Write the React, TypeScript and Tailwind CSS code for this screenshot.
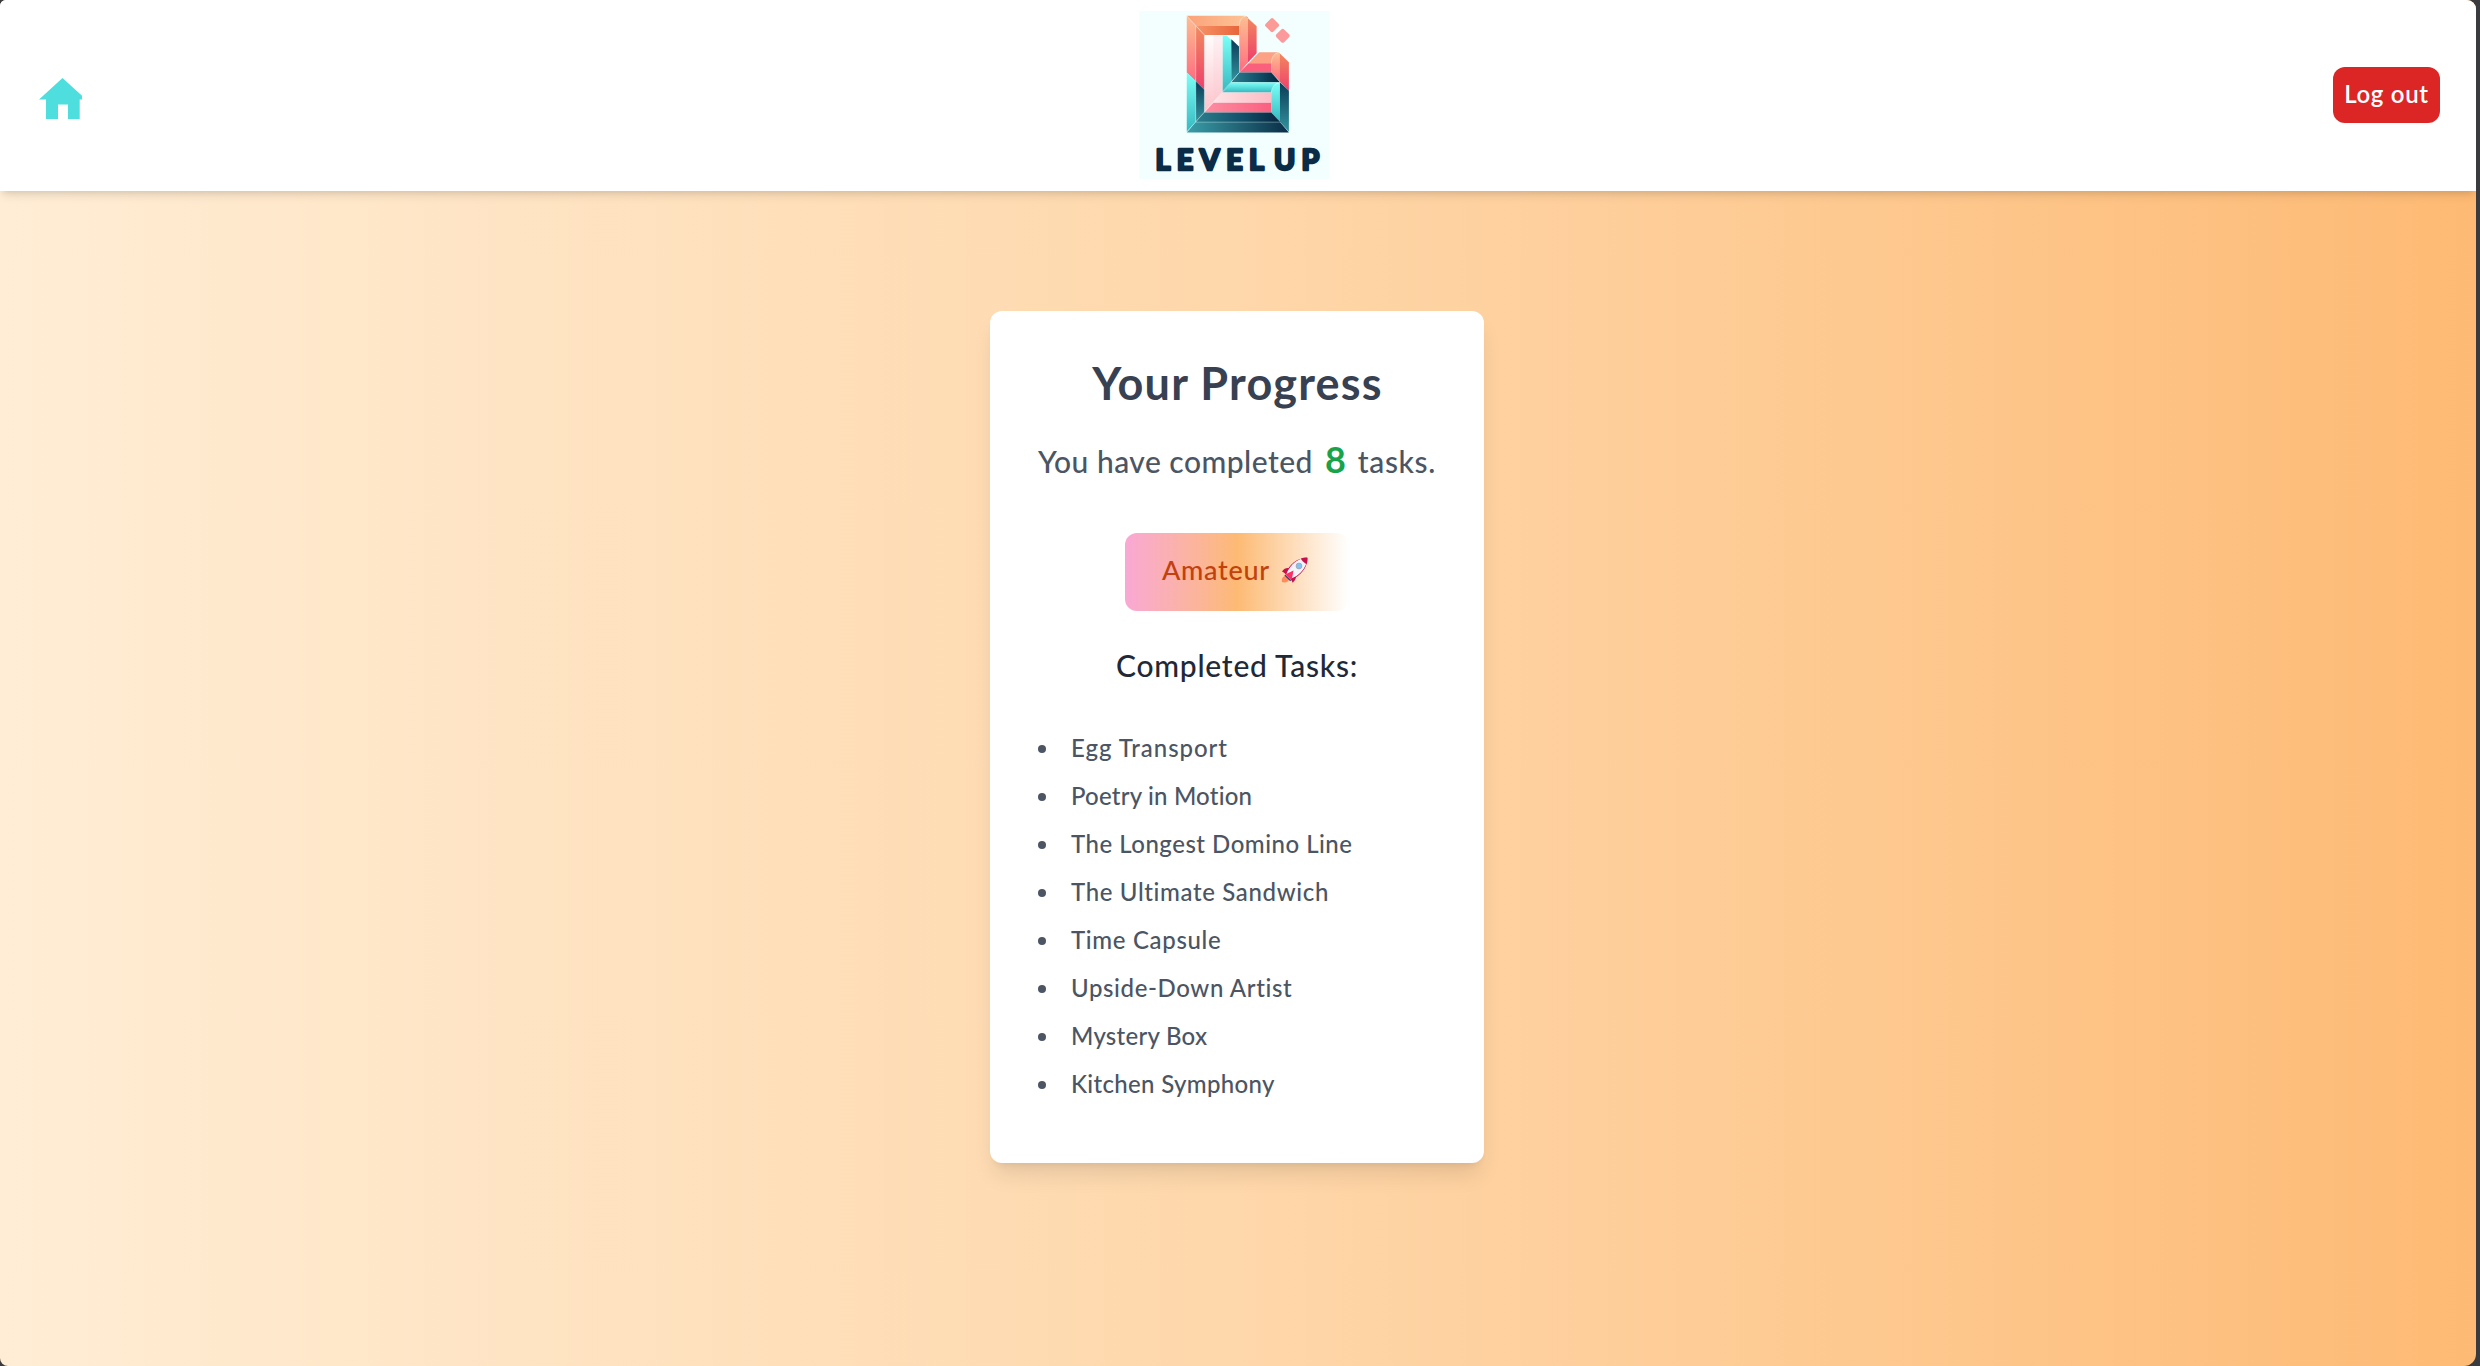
const tasks = [
  { name: "Egg Transport", tracking: "tracking-[0.95px]" },
  { name: "Poetry in Motion", tracking: "tracking-[0.2px]" },
  { name: "The Longest Domino Line", tracking: "tracking-[0.5px]" },
  { name: "The Ultimate Sandwich", tracking: "tracking-[0.64px]" },
  { name: "Time Capsule", tracking: "tracking-[0.67px]" },
  { name: "Upside-Down Artist", tracking: "tracking-[0.62px]" },
  { name: "Mystery Box", tracking: "tracking-[0.26px]" },
  { name: "Kitchen Symphony", tracking: "tracking-[0.33px]" },
];

function HomeIcon() {
  return (
    <svg className="block h-[48px] w-[48px]" viewBox="34 71 48 48">
      <path
        d="M62.5 78 39 99.5H46V119H58V104.5H68V119H79.7V99.5H86Z"
        fill="#4fdede"
      />
    </svg>
  );
}

function Logo() {
  return (
    <svg className="block h-[168px] w-[191px]" viewBox="27 33 573 505">
      <defs>
        <linearGradient id="peach" x1="0" y1="0" x2="0" y2="1">
          <stop offset="0" stopColor="#fdbf92" />
          <stop offset="1" stopColor="#fd6d80" />
        </linearGradient>
        <linearGradient id="red" x1="0" y1="0" x2="0" y2="1">
          <stop offset="0" stopColor="#f28a5f" />
          <stop offset="1" stopColor="#ee3f6b" />
        </linearGradient>
        <linearGradient id="orange" x1="0" y1="0" x2="1" y2="0">
          <stop offset="0" stopColor="#f79468" />
          <stop offset="1" stopColor="#e8653b" />
        </linearGradient>
        <linearGradient id="top" x1="0" y1="0" x2="1" y2="0">
          <stop offset="0" stopColor="#fba27a" />
          <stop offset="1" stopColor="#fdc294" />
        </linearGradient>
        <linearGradient id="pale" x1="0" y1="0" x2="0" y2="1">
          <stop offset="0" stopColor="#fffdfd" />
          <stop offset="1" stopColor="#fcc3ca" />
        </linearGradient>
        <linearGradient id="pinkBar" x1="0" y1="0" x2="1" y2="0">
          <stop offset="0" stopColor="#fde3e5" />
          <stop offset="1" stopColor="#fdbcc5" />
        </linearGradient>
        <linearGradient id="roseBar" x1="0" y1="0" x2="1" y2="0">
          <stop offset="0" stopColor="#fc8fa2" />
          <stop offset="1" stopColor="#fb5f80" />
        </linearGradient>
        <linearGradient id="aqua" x1="0" y1="0" x2="0" y2="1">
          <stop offset="0" stopColor="#7dfff7" />
          <stop offset="1" stopColor="#35b9c0" />
        </linearGradient>
        <linearGradient id="teal" x1="0" y1="0" x2="0" y2="1">
          <stop offset="0" stopColor="#0b3a56" />
          <stop offset="1" stopColor="#32959f" />
        </linearGradient>
        <linearGradient id="navy" x1="0" y1="0" x2="1" y2="0">
          <stop offset="0" stopColor="#2b7f8e" />
          <stop offset="0.55" stopColor="#12506a" />
          <stop offset="1" stopColor="#06243d" />
        </linearGradient>
        <linearGradient id="base" x1="0" y1="0" x2="1" y2="0">
          <stop offset="0" stopColor="#3a9ea8" />
          <stop offset="1" stopColor="#0a2c46" />
        </linearGradient>
      </defs>
      <rect x="27" y="33" width="573" height="505" fill="#f3ffff" />
      <path d="M223 105H328V278L223 338Z" fill="#fff" />
      <path d="M223 105H278V278L223 337Z" fill="url(#pale)" />
      <path d="M250 105H278V278L250 306Z" fill="#fbc4cb" opacity=".18" />
      <path d="M170 47 197 79V244L170 218Z" fill="url(#peach)" />
      <path d="M197 79 223 105V270L197 244Z" fill="url(#red)" />
      <path d="M170 47H345L328 79H197Z" fill="url(#top)" />
      <path d="M197 78H328V105H223Z" fill="url(#orange)" />
      <path d="M328 75Q330 52 348 48L354 55V188L328 218Z" fill="url(#peach)" />
      <path d="M346 47 380 79V160L354 188V52Z" fill="url(#red)" />
      <path d="M278 107 290 107 304 120V248L278 278Z" fill="url(#aqua)" />
      <path d="M304 118 327 140V218L304 246Z" fill="url(#teal)" />
      <path d="M388 157H448Q430 160 424 190H356Z" fill="#fca184" />
      <path d="M356 190H424V218H328Z" fill="#fa5f7c" />
      <path d="M424 188Q426 162 447 158L451 163V246L424 218Z" fill="url(#peach)" />
      <path d="M446 157 477 187V273L450 246V162Z" fill="url(#red)" />
      <path d="M328 218H424L450 247H304Z" fill="url(#navy)" />
      <path d="M304 248H446Q430 254 424 278H278Z" fill="url(#aqua)" />
      <path d="M278 278H424V309H250Z" fill="url(#pinkBar)" />
      <path d="M250 309H424V338H223Z" fill="url(#roseBar)" />
      <path d="M424 278Q426 254 450 249V366L424 338Z" fill="url(#aqua)" />
      <path d="M450 247 477 273V396L450 366Z" fill="url(#teal)" />
      <path d="M170 218 197 244V367L170 396Z" fill="url(#aqua)" />
      <path d="M197 244 223 270V338L197 367Z" fill="url(#teal)" />
      <path d="M223 338H424L451 367H197Z" fill="url(#navy)" />
      <path d="M197 367H450L477 398H170Z" fill="url(#base)" />
      <path
        d="M172 394 328 218M197 79V367M223 105V338M170 47 223 105M328 75Q330 50 350 48M424 188Q426 160 447 158M424 278Q426 252 448 249M197 367H450"
        fill="none"
        stroke="#e9ffff"
        strokeOpacity=".55"
        strokeWidth="2"
      />
      <rect x="410" y="59" width="33" height="33" rx="6" transform="rotate(45 426.500 75.500)" fill="#fb9a97" />
      <rect x="442" y="91" width="33" height="33" rx="6" transform="rotate(45 458.500 107.500)" fill="#fb9a9c" />
      <g
        fill="#0a2c46"
        stroke="#0a2c46"
        strokeWidth="8"
        strokeLinejoin="round"
        className="font-['Lato'] text-[86px] font-bold"
      >
        <text x="76" y="511" textLength="326" lengthAdjust="spacing">LEVEL</text>
        <text x="432" y="511" textLength="136" lengthAdjust="spacing">UP</text>
      </g>
    </svg>
  );
}

function Rocket() {
  return (
    <svg className="block h-[27px] w-[27px]" viewBox="0 0 84 84">
      <path d="M3 78C0 64 9 58 18 59L26 68C24 77 14 82 3 78Z" fill="#ff8a5b" />
      <path d="M3 45C10 35 20 32 30 36L17 55C12 50 7 47 3 45Z" fill="#c8114c" />
      <path d="M36 80C46 73 48 64 46 54L28 67C32 71 34 75 36 80Z" fill="#c8114c" />
      <path d="M14 52C26 22 50 2 82 2C83 32 62 58 32 70Z" fill="#c8114c" />
      <path d="M17 52C28 28 42 14 64 5C70 8 76 14 79 20C70 42 56 57 32 67Z" fill="#f3f3f8" />
      <path d="M62 5C69 2 76 1 82 2C83 8 82 15 80 22C76 22 64 12 62 5Z" fill="#c8114c" />
      <path d="M14 54 39 42 34 68 30 71Z" fill="#fb2f63" />
      <path d="M12 56 30 74" stroke="#3f3c78" strokeWidth="4" />
      <circle cx="56" cy="28" r="9" fill="#7cc4f5" stroke="#a9a7b4" strokeWidth="3" />
    </svg>
  );
}

export default function App() {
  return (
    <div className="h-[1366px] w-[2480px] overflow-hidden bg-[#3a3b3e] pr-[4px] font-['Lato','Open_Sans',sans-serif]">
      <div className="flex h-full flex-col overflow-hidden rounded-tl-[6px] rounded-tr-[9px] rounded-br-[12px] rounded-bl-[8px] bg-linear-to-r from-[#ffedd5] via-[#fed7aa] to-[#fdba74]">
        <header className="grid h-[191px] shrink-0 grid-cols-[1105px_191px_1fr] items-center bg-white pr-[36px] pb-[1px] pl-[34px] shadow-[0_6px_9px_-1.5px_rgb(0_0_0/0.1),0_3px_6px_-3px_rgb(0_0_0/0.1)]">
          <a href="#" aria-label="Home" className="justify-self-start">
            <HomeIcon />
          </a>
          <Logo />
          <button className="h-[56px] w-[107px] justify-self-end rounded-[12px] bg-[#dc2626] pb-[2px] text-[24px] font-semibold tracking-[0.7px] whitespace-nowrap text-white">
            Log out
          </button>
        </header>
        <main className="flex grow justify-center pt-[120px] pr-[2px]">
          <section className="flex h-[852px] w-[494px] flex-col items-center rounded-[12px] bg-white pt-[45px] shadow-[0_15px_22.5px_-4.5px_rgb(0_0_0/0.1),0_6px_9px_-6px_rgb(0_0_0/0.1)]">
            <h1 className="pl-[1px] text-[45px] leading-[54px] font-bold tracking-[1.2px] text-[#374151]">
              Your Progress
            </h1>
            <p className="mt-[24px] ml-[48px] flex h-[54px] items-baseline self-start text-[30px] leading-[54px] font-medium whitespace-pre text-[#4b5563]">
              <span className="tracking-[0.48px]">You have completed</span>
              <span className="mx-[12px] text-[36px] leading-none font-bold text-[#16a34a]">8</span>
              <span className="tracking-[0.6px]">tasks.</span>
            </p>
            <div className="mt-[45px] flex h-[78px] w-[224px] rounded-[12px] bg-linear-to-r from-[#f9a8d4] via-[#fdba74] to-transparent pt-[16px] pl-[37px] text-[27px] leading-[42px] font-medium tracking-[0.7px] text-[#c2410c]">
              <span>Amateur</span>
              <span className="mt-[8px] ml-[11px]">
                <Rocket />
              </span>
            </div>
            <h2 className="mt-[33px] text-[30px] leading-[42px] font-medium tracking-[0.75px] text-[#1f2937]">
              Completed Tasks:
            </h2>
            <ul className="mt-[44px] flex w-full flex-col gap-[12px] pl-[48px] text-[24px] leading-[36px] font-medium text-[#4b5563]">
              {tasks.map((task) => (
                <li key={task.name} className="flex items-center">
                  <span className="mt-[1px] mr-[25px] size-[8px] rounded-full bg-[#4b5563]" />
                  <span className={task.tracking}>{task.name}</span>
                </li>
              ))}
            </ul>
          </section>
        </main>
      </div>
    </div>
  );
}
